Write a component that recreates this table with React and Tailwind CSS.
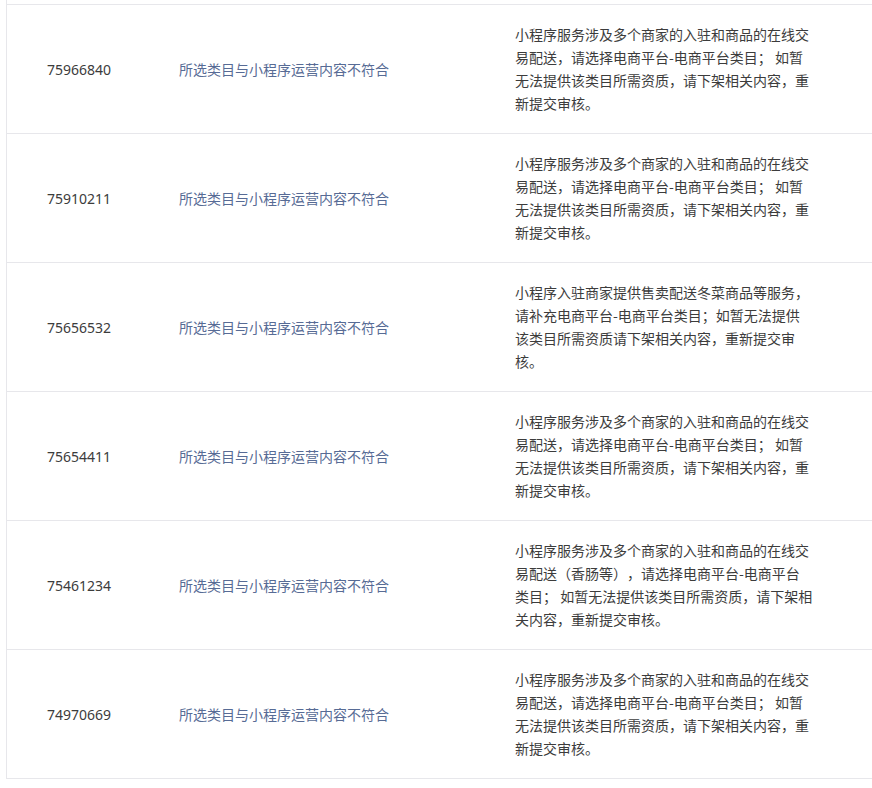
import React from 'react';

const rows = [
  {
    id: '75966840',
    desc: '小程序服务涉及多个商家的入驻和商品的在线交易配送，请选择电商平台-电商平台类目； 如暂无法提供该类目所需资质，请下架相关内容，重新提交审核。',
  },
  {
    id: '75910211',
    desc: '小程序服务涉及多个商家的入驻和商品的在线交易配送，请选择电商平台-电商平台类目； 如暂无法提供该类目所需资质，请下架相关内容，重新提交审核。',
  },
  {
    id: '75656532',
    desc: '小程序入驻商家提供售卖配送冬菜商品等服务，请补充电商平台-电商平台类目；如暂无法提供该类目所需资质请下架相关内容，重新提交审核。',
  },
  {
    id: '75654411',
    desc: '小程序服务涉及多个商家的入驻和商品的在线交易配送，请选择电商平台-电商平台类目； 如暂无法提供该类目所需资质，请下架相关内容，重新提交审核。',
  },
  {
    id: '75461234',
    desc: '小程序服务涉及多个商家的入驻和商品的在线交易配送（香肠等），请选择电商平台-电商平台类目； 如暂无法提供该类目所需资质，请下架相关内容，重新提交审核。',
  },
  {
    id: '74970669',
    desc: '小程序服务涉及多个商家的入驻和商品的在线交易配送，请选择电商平台-电商平台类目； 如暂无法提供该类目所需资质，请下架相关内容，重新提交审核。',
  },
];

const App = () => {
  return (
    <div
      className="min-h-[788px] bg-white pl-[6px] text-[14px] [text-spacing-trim:space-all]"
      style={{ fontFamily: '"Noto Sans CJK SC", "Noto Sans", sans-serif' }}
    >
      <div className="border-l border-b border-[#e7e7eb]">
        {/* tail of the row above, cut off by the scroll */}
        <div className="h-[4px]" />
        {rows.map((row) => (
          <div key={row.id} className="flex h-[129px] items-center border-t border-[#e7e7eb]">
            <div className="w-[132px] shrink-0 pl-[40px] font-['Noto_Sans',sans-serif] text-[#3c3c3c]">{row.id}</div>
            <div className="w-[336px] shrink-0 pl-[40px] text-[#576b95]">所选类目与小程序运营内容不符合</div>
            <div className="w-[298px] shrink-0 ml-[40px] leading-[23px] text-[#3c3c3c]">{row.desc}</div>
          </div>
        ))}
      </div>
    </div>
  );
};

export default App;
